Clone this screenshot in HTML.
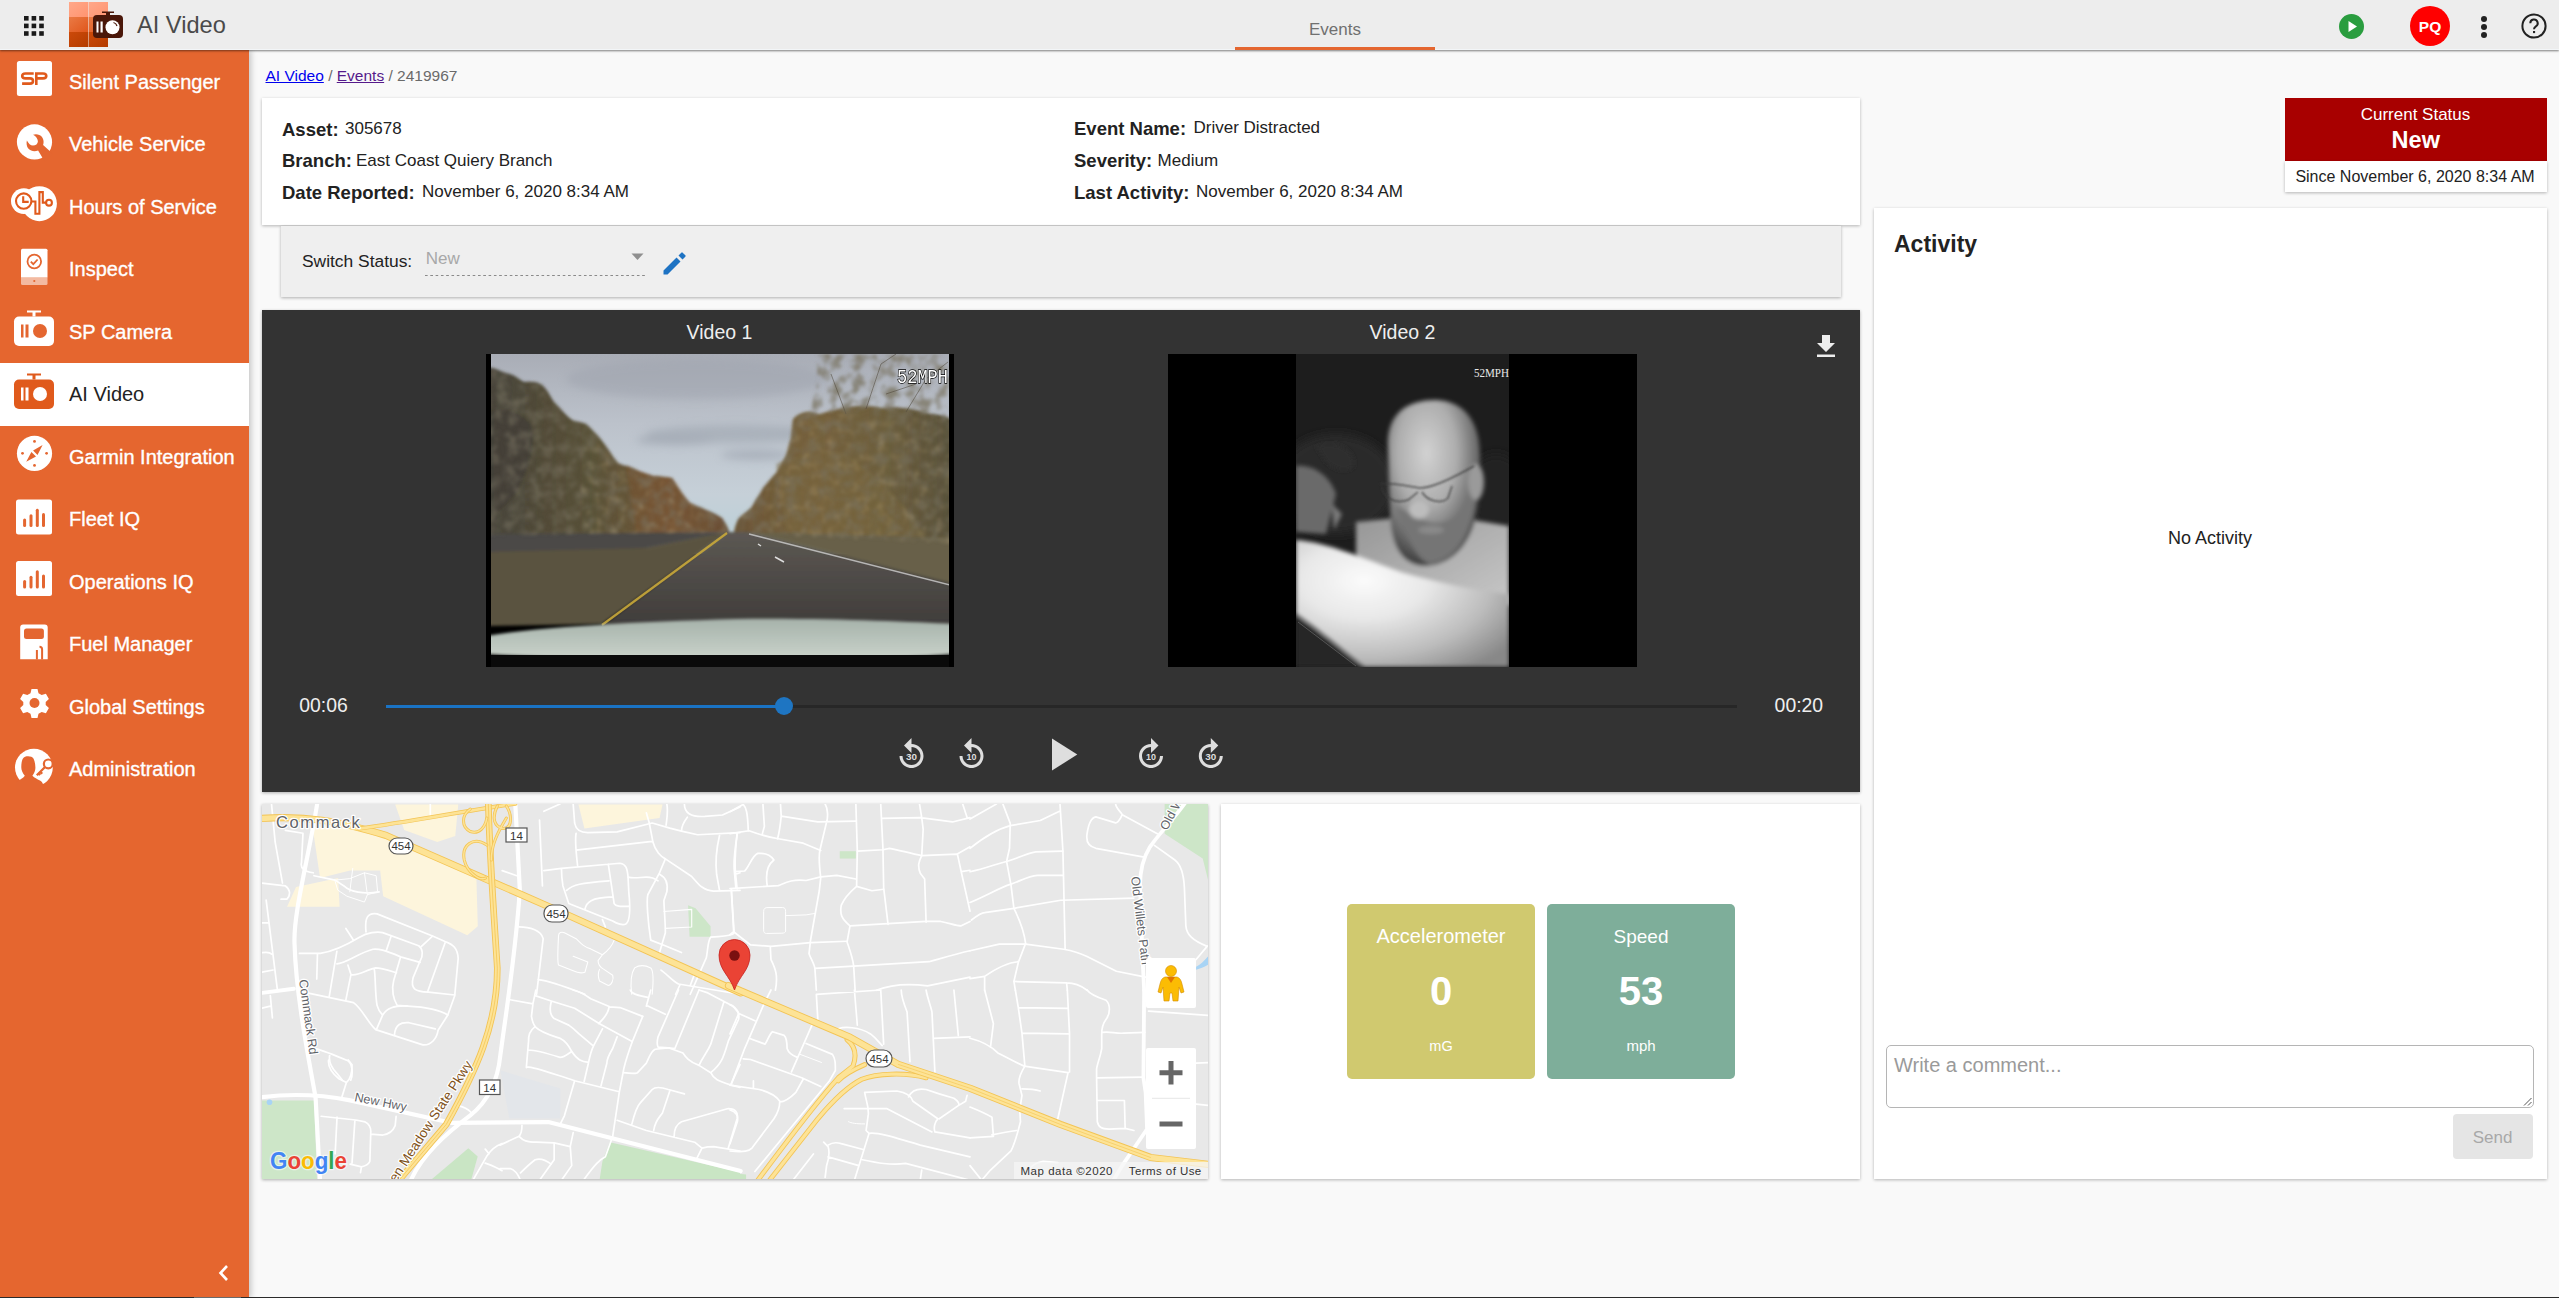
<!DOCTYPE html>
<html><head><meta charset="utf-8">
<style>
*{box-sizing:border-box;margin:0;padding:0}
html,body{width:2559px;height:1298px;overflow:hidden;background:#f9f9f9;font-family:"Liberation Sans",sans-serif;color:#222}
.a{position:absolute;line-height:1;white-space:nowrap}
.c{transform:translateX(-50%)}
#hdr{left:0;top:0;width:2559px;height:50px;background:#ededed;border-bottom:1px solid #f3f6f8;box-shadow:0 1px 2px rgba(0,0,0,.5);z-index:5}
#side{left:0;top:50px;width:249px;height:1248px;background:#e5662f;box-shadow:2px 0 6px rgba(0,0,0,.22);z-index:4}
.it{position:absolute;left:0;width:249px;height:63px;color:#fff;font-size:20px}
.it .tx{position:absolute;left:69px;top:21.5px;line-height:1;white-space:nowrap;-webkit-text-stroke:0.35px #fff}
.it.act{background:#fff;color:#222}
.it.act .tx{-webkit-text-stroke:0}
.it svg{position:absolute;left:0;top:0}
.card{background:#fff;box-shadow:0 1px 3px rgba(0,0,0,.28)}
.lbl{font-weight:bold;font-size:18.5px;color:#222}
.val{font-size:17px;color:#222}
</style></head><body>
<!-- HEADER -->
<div id="hdr" class="a">
  <svg class="a" style="left:24px;top:16px" width="20" height="20" viewBox="0 0 20 20" fill="#1a1a1a">
    <rect x="0" y="0" width="4.6" height="4.6"/><rect x="7.6" y="0" width="4.6" height="4.6"/><rect x="15.2" y="0" width="4.6" height="4.6"/>
    <rect x="0" y="7.6" width="4.6" height="4.6"/><rect x="7.6" y="7.6" width="4.6" height="4.6"/><rect x="15.2" y="7.6" width="4.6" height="4.6"/>
    <rect x="0" y="15.2" width="4.6" height="4.6"/><rect x="7.6" y="15.2" width="4.6" height="4.6"/><rect x="15.2" y="15.2" width="4.6" height="4.6"/>
  </svg>
  <svg class="a" style="left:69px;top:2px" width="56" height="46" viewBox="0 0 56 46">
    <defs>
      <linearGradient id="lg1" x1="0" y1="0" x2="1" y2="1"><stop offset="0" stop-color="#ffa88a"/><stop offset="1" stop-color="#ff9470"/></linearGradient>
      <linearGradient id="lg2" x1="0" y1="0" x2="1" y2="1"><stop offset="0" stop-color="#ea7a45"/><stop offset="1" stop-color="#e0571c"/></linearGradient>
      <linearGradient id="lg3" x1="0" y1="0" x2="1" y2="1"><stop offset="0" stop-color="#cc4a0a"/><stop offset="1" stop-color="#b33c00"/></linearGradient>
    </defs>
    <rect x="0" y="0" width="19" height="15" fill="url(#lg1)"/><rect x="19.5" y="0" width="19.5" height="15" fill="url(#lg1)"/>
    <rect x="0" y="15" width="19" height="15" fill="url(#lg2)"/><rect x="19.5" y="15" width="19.5" height="15" fill="url(#lg2)"/>
    <rect x="0" y="30" width="19" height="15" fill="url(#lg3)"/><rect x="19.5" y="30" width="19.5" height="15" fill="url(#lg3)"/>
    <path d="M33 9.5h12v1.5h-4v4h-4v-4h-4z" fill="#4a1709"/>
    <rect x="24" y="13" width="30" height="23" rx="4" fill="#4a1709"/>
    <rect x="27.5" y="19.5" width="2" height="11" fill="#fff"/><rect x="31.5" y="19.5" width="2.2" height="11" fill="#fff"/>
    <circle cx="43.5" cy="25.3" r="7" fill="#fff"/>
    <path d="M44.5 20.5a5 5 0 0 1 3.5 3.5" stroke="#4a1709" stroke-width="1.2" fill="none"/>
  </svg>
  <div class="a" style="left:137px;top:14px;font-size:23.6px;color:#4a4a4a">AI Video</div>
  <div class="a" style="left:1309px;top:21.4px;font-size:17px;color:#707070">Events</div>
  <div class="a" style="left:1235px;top:47px;width:200px;height:2.5px;background:#e46630"></div>
  <svg class="a" style="left:2339px;top:13.5px" width="25" height="25" viewBox="0 0 25 25"><circle cx="12.5" cy="12.5" r="12.5" fill="#2a9d3f"/><path d="M9.5 7v11l8.5-5.5z" fill="#fff"/></svg>
  <svg class="a" style="left:2410px;top:6px" width="40" height="40" viewBox="0 0 40 40"><circle cx="20" cy="20" r="20" fill="#f00"/></svg>
  <div class="a c" style="left:2430px;top:18.5px;font-size:15.5px;font-weight:bold;color:#fff">PQ</div>
  <svg class="a" style="left:2478px;top:15px" width="12" height="24" viewBox="0 0 12 24" fill="#222"><circle cx="6" cy="4" r="3"/><circle cx="6" cy="12" r="3"/><circle cx="6" cy="20" r="3"/></svg>
  <svg class="a" style="left:2520px;top:12px" width="28" height="28" viewBox="0 0 28 28"><circle cx="14" cy="14" r="11.6" fill="none" stroke="#222" stroke-width="2"/><path d="M10.3 11.2a3.7 3.7 0 1 1 5.6 3.1c-1.2.8-1.9 1.4-1.9 3" fill="none" stroke="#222" stroke-width="2"/><rect x="13" y="19" width="2.1" height="2.1" fill="#222"/></svg>
</div>

<!-- SIDEBAR -->
<div id="side" class="a">
  <div class="it" style="top:0px"><span class="tx">Silent Passenger</span>
    <svg width="60" height="63" viewBox="0 0 60 63"><rect x="16.9" y="10.9" width="35.1" height="35" rx="2.5" fill="#fff"/>
    <path d="M33.7,23.5 H25.5 C23.4,23.5 22.2,24.7 22.2,26 C22.2,27.3 23.4,28.4 25.5,28.4 H30 C32.1,28.4 33,29.5 33,31 C33,32.5 32.1,33.6 30,33.6 H22.1 M35,23.5 H43 C45.2,23.5 46.3,24.8 46.3,26 C46.3,27.3 45.2,28.4 43,28.4 H36.3 M36.3,23.5 V35" fill="none" stroke="#e05a1c" stroke-width="2.6"/></svg></div>
  <div class="it" style="top:62.5px"><span class="tx">Vehicle Service</span>
    <svg width="60" height="63" viewBox="0 0 60 63"><circle cx="34.5" cy="28.9" r="17.6" fill="#fff"/>
    <path d="M33.1,21.7 C35.5,20.8 40,21 42,24 C43.8,26.5 44,29.5 43.1,32.1 L53,41 L45,49 L38.1,37.5 C35,38.8 31,38.5 28.5,35.8 C26.5,33.5 26.2,30 26.9,27.5 C28.5,30.5 30.5,32.6 33,32.6 C35.8,32.6 37.8,30.8 37.9,28.5 C38,26 36,23.2 33.1,21.7 Z" fill="#e46630"/></svg></div>
  <div class="it" style="top:125px"><span class="tx">Hours of Service</span>
    <svg width="60" height="63" viewBox="0 0 60 63"><circle cx="23.9" cy="26.1" r="12.9" fill="#fff"/><circle cx="39.4" cy="28.7" r="17.5" fill="#fff"/>
    <g fill="none" stroke="#e05a1c" stroke-width="2.1"><circle cx="23.7" cy="26.1" r="7.7"/><path d="M23.2,21.3 V26.9 H28.7"/><path d="M31.4,26.5 H35.4 V38.8 H39.4 V17.1 H42.8 V27.6 H46.1"/><circle cx="49" cy="27.7" r="2.9"/></g></svg></div>
  <div class="it" style="top:187.5px"><span class="tx">Inspect</span>
    <svg width="60" height="63" viewBox="0 0 60 63"><path d="M21 12.2a1.5 1.5 0 0 1 1.5-1.5h23.5a1.5 1.5 0 0 1 1.5 1.5v27.3h-26.5z" fill="#fff"/><path d="M21 39.5h26.5v6a1.5 1.5 0 0 1 -1.5 1.5h-23.5a1.5 1.5 0 0 1 -1.5-1.5z" fill="#fff" opacity=".55"/>
    <circle cx="34.3" cy="23.5" r="6.8" fill="none" stroke="#e46630" stroke-width="1.8"/><path d="M30.8 23.6l2.5 2.5l4.3-4.6" fill="none" stroke="#e46630" stroke-width="1.8"/><circle cx="34.3" cy="43" r="1.1" fill="#e46630"/></svg></div>
  <div class="it" style="top:250px"><span class="tx">SP Camera</span>
    <svg width="60" height="63" viewBox="0 0 60 63"><path d="M27 10.5h14v2h-5.5v4h-3v-4h-5.5z" fill="#fff"/><rect x="14" y="16.5" width="40" height="29.5" rx="5" fill="#fff"/>
    <rect x="21" y="24.5" width="2.5" height="13" fill="#e46630"/><rect x="25.5" y="24.5" width="3" height="13" fill="#e46630"/><circle cx="40" cy="31" r="7" fill="#e46630"/></svg></div>
  <div class="it act" style="top:312.5px"><span class="tx">AI Video</span>
    <svg width="60" height="63" viewBox="0 0 60 63"><path d="M27 10.5h14v2h-5.5v4h-3v-4h-5.5z" fill="#e05a1c"/><rect x="14" y="16.5" width="40" height="29.5" rx="5" fill="#e05a1c"/>
    <rect x="21" y="24.5" width="2.5" height="13" fill="#fff"/><rect x="25.5" y="24.5" width="3" height="13" fill="#fff"/><circle cx="40" cy="31" r="7" fill="#fff"/></svg></div>
  <div class="it" style="top:375px"><span class="tx">Garmin Integration</span>
    <svg width="60" height="63" viewBox="0 0 60 63"><circle cx="34.5" cy="28.4" r="17.6" fill="#fff"/>
    <g fill="#e46630"><circle cx="34.5" cy="16.4" r="1.4"/><circle cx="22.5" cy="28.3" r="1.4"/><circle cx="46.6" cy="28.3" r="1.4"/><circle cx="34.5" cy="40.4" r="1.4"/>
    <path d="M42.6,20.1 L33.1,25.4 L37.5,30 Z M26.2,36.8 L31.4,27 L36,31.6 Z"/></g></svg></div>
  <div class="it" style="top:437.5px"><span class="tx">Fleet IQ</span>
    <svg width="60" height="63" viewBox="0 0 60 63"><rect x="16" y="11.5" width="36" height="35" rx="2.5" fill="#fff"/>
    <g fill="#e46630"><rect x="23.1" y="30.5" width="3" height="8.5" rx="1.5"/><rect x="29.5" y="26.3" width="3" height="12.7" rx="1.5"/><rect x="35.8" y="20.8" width="3" height="18.2" rx="1.5"/><rect x="42" y="25" width="3" height="14" rx="1.5"/></g></svg></div>
  <div class="it" style="top:500px"><span class="tx">Operations IQ</span>
    <svg width="60" height="63" viewBox="0 0 60 63"><rect x="16" y="11" width="36" height="35" rx="2.5" fill="#fff"/>
    <g fill="#e46630"><rect x="23.1" y="30" width="3" height="8.5" rx="1.5"/><rect x="29.5" y="25.8" width="3" height="12.7" rx="1.5"/><rect x="35.8" y="20.3" width="3" height="18.2" rx="1.5"/><rect x="42" y="24.5" width="3" height="14" rx="1.5"/></g></svg></div>
  <div class="it" style="top:562.5px"><span class="tx">Fuel Manager</span>
    <svg width="60" height="63" viewBox="0 0 60 63"><path d="M20.2,14.6 a3,3 0 0 1 3-3 h21.5 a3,3 0 0 1 3,3 V46.3 H20.2 Z" fill="#fff"/>
    <rect x="24" y="15.4" width="19.9" height="10.6" rx="2.5" fill="#e46630"/><path d="M36.9,37 V46.5 M39.5,33.8 C41.2,33.8 42.1,35 42.1,36.5 V46.5" fill="none" stroke="#e46630" stroke-width="2"/></svg></div>
  <div class="it" style="top:625px"><span class="tx">Global Settings</span>
    <svg width="60" height="63" viewBox="0 0 60 63"><g transform="translate(34.5 28)"><path d="M-3 -14h6l1 4.2 3.2 1.8 4.2-1.3 3 5.2-3.2 3v3.2l3.2 3-3 5.2-4.2-1.3-3.2 1.8-1 4.2h-6l-1-4.2-3.2-1.8-4.2 1.3-3-5.2 3.2-3v-3.2l-3.2-3 3-5.2 4.2 1.3 3.2-1.8z" fill="#fff"/><circle r="5" fill="#e46630"/></g></svg></div>
  <div class="it" style="top:687.5px"><span class="tx">Administration</span>
    <svg width="60" height="63" viewBox="0 0 60 63"><defs><clipPath id="admc"><circle cx="33.9" cy="29.6" r="18.9"/></clipPath></defs>
    <circle cx="33.9" cy="29.6" r="18.9" fill="#fff"/>
    <g><path d="M16,45 C19,42 23.5,40 24.8,37.8 C22.5,35 21.3,32 21.3,29.5 C21.2,26 21.8,22.5 22.8,20.8 C24,18.8 26,18.3 28.1,18.3 C30.5,18.3 32.5,19 33.6,20.8 C34.8,23 35.2,26 35.4,29.5 C35.5,32 34.5,35 32.4,37.8 C34.5,40 37,41 40,42.5 C41.5,43.2 42.5,44.5 43.2,46.5 L43.2,52 L16,52 Z" fill="#e46630"/>
    <path d="M45.3,28.8 L36.8,37.3 M40.3,33.8 L42.2,35.7 M38.6,35.5 L40.2,37" stroke="#e46630" stroke-width="2.3" fill="none"/></g>
    <circle cx="48.3" cy="25.9" r="4.4" fill="#fff" stroke="#e46630" stroke-width="2.2"/></svg></div>
  <svg class="a" style="left:216px;top:1214px" width="16" height="18" viewBox="0 0 16 18"><path d="M11 2l-6.5 7l6.5 7" fill="none" stroke="#fff" stroke-width="2.6"/></svg>
</div>

<!-- BREADCRUMB -->
<div class="a" style="left:265.5px;top:67.7px;font-size:15.5px;color:#6a6a6a"><span style="color:#0000ee;text-decoration:underline">AI Video</span> / <span style="color:#551a8b;text-decoration:underline">Events</span> / 2419967</div>

<!-- INFO CARD -->
<div class="a card" style="left:262px;top:98px;width:1598px;height:127px"></div>
<div class="a lbl" style="left:282px;top:121.1px">Asset:</div>
<div class="a val" style="left:345px;top:120.3px">305678</div>
<div class="a lbl" style="left:282px;top:152.3px">Branch:</div>
<div class="a val" style="left:356px;top:151.5px">East Coast Quiery Branch</div>
<div class="a lbl" style="left:282px;top:184.3px">Date Reported:</div>
<div class="a val" style="left:422px;top:183.3px">November 6, 2020 8:34 AM</div>
<div class="a lbl" style="left:1074px;top:120.1px">Event Name:</div>
<div class="a val" style="left:1193.5px;top:119.3px">Driver Distracted</div>
<div class="a lbl" style="left:1074px;top:152.3px">Severity:</div>
<div class="a val" style="left:1157.6px;top:151.5px">Medium</div>
<div class="a lbl" style="left:1074px;top:184.3px">Last Activity:</div>
<div class="a val" style="left:1196px;top:183.3px">November 6, 2020 8:34 AM</div>

<!-- SWITCH STATUS -->
<div class="a" style="left:281px;top:226px;width:1560px;height:71px;background:#efefef;box-shadow:0 1px 3px rgba(0,0,0,.3)"></div>
<div class="a" style="left:302px;top:253.1px;font-size:17.4px;color:#222">Switch Status:</div>
<div class="a" style="left:425.7px;top:249.5px;font-size:17px;color:#a8a8a8">New</div>
<div class="a" style="left:425px;top:275px;width:222px;height:1px;background-image:linear-gradient(to right,#8a8a8a 45%,transparent 45%);background-size:5.3px 1px"></div>
<svg class="a" style="left:631px;top:253px" width="13" height="8" viewBox="0 0 13 8"><path d="M0.5 0.5h12l-6 6.5z" fill="#8f8f8f"/></svg>
<svg class="a" style="left:662px;top:250px" width="26" height="26" viewBox="0 0 26 26"><path d="M1.5 20.5v4h4l13-13-4-4z M20.5 9.5l2.8-2.8a1 1 0 0 0 0-1.4l-2.6-2.6a1 1 0 0 0 -1.4 0l-2.8 2.8z" fill="#1e73c3"/></svg>

<!-- STATUS BOX -->
<div class="a" style="left:2285px;top:98px;width:262px;height:62.5px;background:#a80000"></div>
<div class="a card" style="left:2285px;top:160.5px;width:262px;height:31.5px"></div>
<div class="a c" style="left:2415.5px;top:106px;font-size:17px;color:#fff">Current Status</div>
<div class="a c" style="left:2415.75px;top:129.3px;font-size:23.5px;font-weight:bold;color:#fff">New</div>
<div class="a c" style="left:2415px;top:169px;font-size:16px;color:#222">Since November 6, 2020 8:34 AM</div>

<!-- VIDEO PANEL -->
<div class="a" style="left:262px;top:310px;width:1598px;height:481.5px;background:#333;box-shadow:0 1px 3px rgba(0,0,0,.3)"></div>
<div class="a c" style="left:719.5px;top:322.7px;font-size:19.5px;color:#eee">Video 1</div>
<div class="a c" style="left:1402.5px;top:322.7px;font-size:19.5px;color:#eee">Video 2</div>
<div id="v1" class="a" style="left:486px;top:354px;width:468px;height:312.5px;background:#000;overflow:hidden"><svg width="468" height="313" viewBox="0 0 468 313" style="position:absolute;left:0;top:0">
<defs>
 <linearGradient id="sky" x1="0" y1="0" x2="0" y2="1">
  <stop offset="0" stop-color="#a9adb6"/><stop offset=".35" stop-color="#bcc2cb"/><stop offset=".7" stop-color="#c6d0d8"/><stop offset="1" stop-color="#b8d0d8"/>
 </linearGradient>
 <linearGradient id="road" x1="0" y1="0" x2="0" y2="1">
  <stop offset="0" stop-color="#5c5853"/><stop offset="1" stop-color="#3e3b39"/>
 </linearGradient>
 <linearGradient id="hood" x1="0" y1="0" x2="0" y2="1">
  <stop offset="0" stop-color="#a6b2aa"/><stop offset=".5" stop-color="#b8c3bb"/><stop offset="1" stop-color="#cbd3cb"/>
 </linearGradient>
 <linearGradient id="ltree" x1="0" y1="0" x2="1" y2="0">
  <stop offset="0" stop-color="#48443a"/><stop offset=".45" stop-color="#5a5238"/><stop offset=".75" stop-color="#735636"/><stop offset="1" stop-color="#5c4c36"/>
 </linearGradient>
 <linearGradient id="rtree" x1="0" y1="0" x2="1" y2="0">
  <stop offset="0" stop-color="#6a5436"/><stop offset=".35" stop-color="#76623c"/><stop offset=".7" stop-color="#6c5e3c"/><stop offset="1" stop-color="#57503a"/>
 </linearGradient>
 <filter id="bl1" x="-5%" y="-5%" width="110%" height="110%"><feGaussianBlur stdDeviation="1.4"/></filter>
 <filter id="bl2" x="-20%" y="-20%" width="140%" height="140%"><feGaussianBlur stdDeviation="4"/></filter>
 <filter id="fol" x="0" y="0" width="100%" height="100%">
  <feTurbulence type="fractalNoise" baseFrequency="0.09" numOctaves="3" seed="7" result="n"/>
  <feColorMatrix in="n" type="matrix" values="0 0 0 0 0.2  0 0 0 0 0.18  0 0 0 0 0.13  0 0 0 -3 1.75" result="c"/>
  <feComposite in="c" in2="SourceGraphic" operator="in"/>
 </filter>
 <filter id="fol2" x="0" y="0" width="100%" height="100%">
  <feTurbulence type="fractalNoise" baseFrequency="0.12" numOctaves="2" seed="11" result="n"/>
  <feColorMatrix in="n" type="matrix" values="0 0 0 0 0.62  0 0 0 0 0.48  0 0 0 0 0.26  0 0 0 3 -1.55" result="c"/>
  <feComposite in="c" in2="SourceGraphic" operator="in"/>
 </filter>
 <clipPath id="vc1"><rect x="5" y="0" width="458" height="313"/></clipPath>
</defs>
<rect width="468" height="313" fill="#000"/>
<g clip-path="url(#vc1)">
 <rect x="0" y="0" width="468" height="200" fill="url(#sky)"/>
 <g filter="url(#bl2)" opacity=".5">
  <ellipse cx="210" cy="25" rx="130" ry="20" fill="#9ea3ad"/>
  <ellipse cx="250" cy="80" rx="90" ry="9" fill="#98a0aa"/>
  <ellipse cx="190" cy="86" rx="40" ry="5" fill="#8f96a2"/>
  <ellipse cx="270" cy="101" rx="35" ry="5" fill="#939aa6"/>
 </g>
 <g filter="url(#bl1)">
  
  <path d="M0,14 C8,12 16,19 24,20 C30,22 34,26 38,28 C46,27 52,28 56,31 C62,36 65,44 68,48 C75,55 82,64 88,67 C94,68 98,69 100,70 C105,74 108,78 110,80 C116,86 119,91 122,95 C126,101 129,106 132,109 C136,111 139,112 142,112 C150,116 158,119 167,122 C175,122 181,123 186,124 C190,130 193,134 196,139 C199,143 201,147 204,149 C209,151 212,153 216,154 C224,158 230,160 236,164 C240,170 242,174 243,178 L0,182 Z" fill="url(#ltree)"/>
  <path d="M0,60 C15,50 30,55 45,70 C52,90 40,120 30,140 L0,170 Z" fill="#423f36" opacity=".7"/>
  <path d="M140,112 C150,116 160,119 167,122 L186,124 L196,139 L204,149 L236,164 L243,178 L150,178 Z" fill="#7d5535" opacity=".45"/>
  <path d="M248,178 C249,172 251,167 253,164 C258,160 262,157 265,154 C270,146 274,140 277,134 C282,128 286,123 290,119 C294,112 297,107 300,102 C302,95 303,90 305,85 C306,78 306,71 307,65 C312,60 317,58 322,58 C327,58 330,60 334,60 C340,58 346,56 352,55 C365,52 380,50 395,54 C410,52 430,55 445,60 C452,60 458,62 468,66 L468,188 Z" fill="url(#rtree)"/>
  <path d="M290,110 C310,100 340,95 360,100 C390,120 420,150 440,185 L300,182 Z" fill="#7a6840" opacity=".45"/>
  <path d="M0,180 L244,178 L140,198 L0,204 Z" fill="#4c4a46"/>
  <path d="M0,198 L160,194 L242,178 L116,270 L0,272 Z" fill="#5a5340"/>
  <path d="M242,178 L262,178 L468,230 L468,276 L110,276 Z" fill="url(#road)"/>
  <path d="M262,178 L468,184 L468,230 Z" fill="#67604a"/>
 </g>
 <g filter="url(#bl1)"><g filter="url(#fol)" opacity=".8"><path d="M328,0 L468,0 L468,70 L445,62 L395,56 L352,57 L334,62 L322,60 C330,40 335,20 328,0 Z" fill="#000"/></g></g>
 <g stroke="#4a4234" stroke-width="1" fill="none" opacity=".5">
  <path d="M360,60 L345,20 M380,55 L395,10 L410,0 M420,58 L440,25 L462,8 M400,40 L430,30"/>
 </g>
 <g filter="url(#bl1)"><g filter="url(#fol)" opacity=".5">
  <path d="M0,14 L24,20 L38,28 L56,31 L68,48 L88,67 L100,70 L110,80 L122,95 L132,109 L142,112 L167,122 L186,124 L196,139 L204,149 L216,154 L236,164 L243,178 L0,182 Z M248,178 L253,164 L265,154 L277,134 L290,119 L300,102 L305,85 L307,65 L322,58 L334,60 L352,55 L395,54 L445,60 L468,66 L468,188 Z" fill="#000"/>
 </g>
 <g filter="url(#fol2)" opacity=".22">
  <path d="M100,80 L150,118 L191,127 L204,149 L241,169 L244,180 L90,180 Z M468,66 L322,58 L307,65 L300,102 L283,124 L278,144 L262,155 L250,164 L248,180 L468,190 Z" fill="#000"/>
 </g></g>
 <path d="M241,179 L116,271" stroke="#c9a93a" stroke-width="2.2" fill="none" opacity=".9"/>
 <path d="M263,180 L468,232" stroke="#cfcfcf" stroke-width="1.3" fill="none" opacity=".8"/>
 <path d="M272,190 L275,192 M289,203 L298,208" stroke="#ddd" stroke-width="1.5"/>
 <path d="M0,282 C60,272 150,268 250,265 C350,264 420,268 468,270 L468,300 C400,306 300,306 234,306 C160,306 60,304 0,300 Z" fill="url(#hood)" filter="url(#bl1)"/>
 <rect x="0" y="301" width="468" height="12" fill="#0a0a0a"/>
</g>
<text x="411" y="29" font-family="Liberation Mono" font-size="21" fill="#fff" stroke="#000" stroke-width="1.4" paint-order="stroke" textLength="51" lengthAdjust="spacingAndGlyphs">52MPH</text>
</svg></div>
<div class="a" style="left:1168px;top:354px;width:469px;height:312.5px;background:#000"></div>
<div id="v2" class="a" style="left:1296px;top:354px;width:213px;height:312.5px;background:#1e1e1e;overflow:hidden"><svg width="213" height="313" viewBox="0 0 213 313" style="position:absolute;left:0;top:0">
<defs>
 <radialGradient id="head" cx=".42" cy=".32" r=".72">
  <stop offset="0" stop-color="#d2d2d2"/><stop offset=".45" stop-color="#adadad"/><stop offset=".8" stop-color="#626262"/><stop offset="1" stop-color="#2e2e2e"/>
 </radialGradient>
 <radialGradient id="arm" cx=".32" cy=".32" r=".85">
  <stop offset="0" stop-color="#fbfbfb"/><stop offset=".35" stop-color="#e8e8e8"/><stop offset=".7" stop-color="#bdbdbd"/><stop offset="1" stop-color="#888"/>
 </radialGradient>
 <linearGradient id="shirt" x1="0" y1="0" x2="1" y2="1"><stop offset="0" stop-color="#959595"/><stop offset="1" stop-color="#c8c8c8"/></linearGradient>
 <filter id="b2" x="-10%" y="-10%" width="120%" height="120%"><feGaussianBlur stdDeviation="2"/></filter>
 <filter id="b1" x="-10%" y="-10%" width="120%" height="120%"><feGaussianBlur stdDeviation="1"/></filter>
 <filter id="b3" x="-20%" y="-20%" width="140%" height="140%"><feGaussianBlur stdDeviation="5"/></filter>
</defs>
<rect width="213" height="313" fill="#1d1d1d"/>
<g filter="url(#b3)">
 <ellipse cx="40" cy="130" rx="60" ry="50" fill="#2a2a2a"/>
 <ellipse cx="200" cy="140" rx="30" ry="40" fill="#232323"/>
</g>
<g filter="url(#b2)">
 <path d="M0,112 C20,110 35,125 40,140 L30,180 L0,178 Z" fill="#6a6a6a"/>
 <path d="M36,150 L46,160 L38,176 Z" fill="#7a7a7a"/>
 <path d="M20,92 C40,85 60,95 58,112 C52,120 38,116 30,108 Z" fill="#2f2f2f"/>
 <path d="M60,168 L140,160 L213,172 L213,252 L60,218 Z" fill="url(#shirt)"/>
 <path d="M92,95 C90,60 110,46 140,46 C170,47 185,70 184,105 L182,150 C178,185 160,210 130,212 C105,212 95,190 94,160 Z" fill="url(#head)"/>
 <path d="M100,152 C108,178 120,206 134,210 C160,206 176,182 180,142 L172,138 C166,160 152,172 134,168 C118,164 108,155 100,152 Z" fill="#757575"/>
 <ellipse cx="180" cy="128" rx="8" ry="18" fill="#9a9a9a"/>
 <ellipse cx="123" cy="156" rx="10" ry="9" fill="#bdbdbd"/>
 <ellipse cx="135" cy="176" rx="13" ry="4" fill="#8a8a8a"/>
</g>
<g filter="url(#b1)" fill="none" stroke="#3a3a3a" stroke-width="1.5" opacity=".8">
 <path d="M84,130 C95,128 110,132 124,134 C135,134 150,128 178,112"/>
 <path d="M86,133 C88,145 100,150 112,146 L122,138 M126,138 C132,148 146,150 152,144 L156,132"/>
</g>
<g filter="url(#b2)">
 <path d="M0,186 C30,188 70,205 105,218 C140,228 175,236 213,240 L213,313 L68,313 C40,290 15,270 0,260 Z" fill="url(#arm)"/>
 <path d="M0,262 C15,272 40,292 66,313 L0,313 Z" fill="#252525"/>
</g>
<path d="M2,268 L60,312" stroke="#555" stroke-width="1"/>
<text x="178" y="23" font-family="Liberation Serif" font-size="12.5" fill="#e8e8e8" textLength="35" lengthAdjust="spacingAndGlyphs">52MPH</text>
</svg></div>
<svg class="a" style="left:1815px;top:334px" width="22" height="24" viewBox="0 0 22 24"><path d="M7 1h8v8h5l-9 9-9-9h5z" fill="#eee"/><rect x="2" y="20.5" width="18" height="2.5" fill="#eee"/></svg>
<div class="a" style="left:299.3px;top:695.7px;font-size:19.4px;color:#eee">00:06</div>
<div class="a" style="left:1774.6px;top:695.7px;font-size:19.4px;color:#eee">00:20</div>
<div class="a" style="left:386px;top:704.5px;width:1351px;height:3px;background:#272727"></div>
<div class="a" style="left:386px;top:704.5px;width:398px;height:3px;background:#1a73c4"></div>
<div class="a" style="left:774.5px;top:697px;width:18px;height:18px;border-radius:50%;background:#1e75c2"></div>

<!-- controls -->
<svg class="a" style="left:0;top:0;overflow:visible" width="1" height="1">
 <g fill="#dedede">
  <g transform="translate(893.5,736.5) scale(1.5)"><path d="M12 5V1L7 6l5 5V7c3.31 0 6 2.69 6 6s-2.69 6-6 6-6-2.69-6-6H4c0 4.42 3.58 8 8 8s8-3.58 8-8-3.58-8-8-8z"/></g>
  <g transform="translate(953.5,736.5) scale(1.5)"><path d="M12 5V1L7 6l5 5V7c3.31 0 6 2.69 6 6s-2.69 6-6 6-6-2.69-6-6H4c0 4.42 3.58 8 8 8s8-3.58 8-8-3.58-8-8-8z"/></g>
  <g transform="translate(1133,736.5) scale(1.5)"><path d="M18 13c0 3.31-2.69 6-6 6s-6-2.69-6-6 2.69-6 6-6v4l5-5-5-5v4c-4.42 0-8 3.58-8 8s3.58 8 8 8 8-3.58 8-8h-2z"/></g>
  <g transform="translate(1192.8,736.5) scale(1.5)"><path d="M18 13c0 3.31-2.69 6-6 6s-6-2.69-6-6 2.69-6 6-6v4l5-5-5-5v4c-4.42 0-8 3.58-8 8s3.58 8 8 8 8-3.58 8-8h-2z"/></g>
  <g transform="translate(1033.6,726.9) scale(2.3)"><path d="M8 5v14l11-7z"/></g>
 </g>
 <g font-family="Liberation Sans" font-size="9.5" font-weight="bold" fill="#dedede" text-anchor="middle">
  <text x="911.5" y="760.3" textLength="11" lengthAdjust="spacingAndGlyphs">30</text>
  <text x="971.5" y="760.3" textLength="10" lengthAdjust="spacingAndGlyphs">10</text>
  <text x="1151" y="760.3" textLength="10" lengthAdjust="spacingAndGlyphs">10</text>
  <text x="1210.8" y="760.3" textLength="11" lengthAdjust="spacingAndGlyphs">30</text>
 </g>
</svg>
<!-- MAP -->
<div id="map" class="a" style="left:262px;top:804px;width:946px;height:374.5px;background:#e8e8e8;box-shadow:0 1px 3px rgba(0,0,0,.3);overflow:hidden"><svg width="946" height="375" viewBox="0 0 946 375" style="position:absolute;left:0;top:0">
<rect width="946" height="375" fill="#e8e8e8"/>
<g transform="translate(-2,-4) scale(0.3004)">
 <path d="M90,355 L120,290 L260,260 L265,355 Z M175,90 L330,85 L560,170 L650,210 L720,250 L725,420 L690,450 L410,320 L400,235 L300,235 L200,260 Z M450,15 L660,15 L650,120 L590,140 L480,100 Z M1060,15 L1340,15 L1330,60 L1080,95 Z" fill="#fdf5dc"/>
 <path d="M0,1000 L180,1000 L190,1270 L0,1270 Z M1425,350 L1450,360 L1500,420 L1500,455 L1430,455 Z" fill="#cde6c8"/>
 <path d="M800,900 L1000,960 L1000,1060 L830,1060 Z" fill="#e3e6ea"/>
</g>
<g transform="translate(238,186) scale(0.14635)"><path d="M750,1040 L900,1075 L1640,1245 L1640,1300 L680,1300 L700,1170 Z" fill="#c9e5c4"/></g>
<g transform="translate(0,256) scale(0.09379)"><path d="M1800,1280 L2200,940 L2300,1030 L2230,1280 Z" fill="#c9e5c4"/><circle cx="80" cy="450" r="30" fill="#a8d4f5"/></g>
<g transform="translate(708,-4) scale(0.14635)">
 <path d="M1330,28 L1650,28 L1650,640 L1590,400 L1330,230 Z" fill="#cde6c8"/>
 <path d="M1545,1140 C1580,1120 1610,1090 1650,1040 L1650,1110 C1610,1140 1580,1150 1545,1160 Z" fill="#a8d4f5"/>
</g>
<g transform="translate(468,-4) scale(0.14635)"><path d="M750,350 L860,350 L860,400 L750,400 Z" fill="#cde6c8"/></g>
<g transform="translate(468,186) scale(0.14635)"><path d="M0,1250 L110,1260 L110,1300 L0,1300 Z" fill="#c9e5c4"/></g>
<!-- minor streets -->
<g fill="none" stroke="#fff" stroke-width="1.7" stroke-linejoin="round" stroke-linecap="round">
 <g transform="translate(0,0) scale(0.14635)">
  <path vector-effect="non-scaling-stroke" d="M65,0 L90,260 L140,540 M160,180 L280,200 L270,400 C260,440 290,460 350,470 M0,540 L160,560 C190,580 200,620 170,650 L130,650 M355,490 L500,520 L560,560 C600,600 700,620 800,600 M1150,0 L1150,80"/>
  <path vector-effect="non-scaling-stroke" stroke-width="1" d="M500,520 L600,510 L700,470 L780,490 L790,600 L720,620 L700,670 L580,630 L520,590 Z M620,440 L600,600 M700,470 L720,620"/>
 </g>
 <g transform="translate(0,96) scale(0.13865)">
  <path vector-effect="non-scaling-stroke" d="M300,665 L660,740 C720,780 760,880 820,935 L1160,1045 C1220,1050 1260,1000 1270,940 L1340,830 L1390,690 L1415,420 C1410,350 1380,320 1320,300 L1230,260 L830,100 C760,90 740,130 750,230"/>
  <path vector-effect="non-scaling-stroke" d="M270,385 L420,385 C520,370 600,330 700,270 C760,235 830,225 870,235 L1130,330 C1160,350 1165,400 1140,440 L1090,560 C1070,640 1100,660 1200,665 L1390,685"/>
  <path vector-effect="non-scaling-stroke" d="M540,370 L485,695 M540,460 C600,460 700,380 800,355 C840,350 880,360 1000,410 L1140,450 M1000,410 L950,580 C930,650 950,720 975,760 L1050,765 C1150,770 1280,790 1340,830 M930,265 L895,370 M1230,260 L1150,335 M1320,310 L1195,660"/>
  <path vector-effect="non-scaling-stroke" d="M620,470 C640,530 640,545 650,540 C700,545 760,500 820,490 C860,490 920,510 970,525 M640,545 L605,720 M810,500 C820,560 815,680 830,760 C840,800 860,820 870,830 M870,830 C900,780 950,760 1050,765 M870,830 L825,935 M955,975 C960,900 1000,880 1060,885 L1250,930"/>
  <path vector-effect="non-scaling-stroke" d="M30,0 L110,640 M0,165 L50,165 M0,380 C30,375 60,380 70,390 M0,520 L80,505 M0,780 L60,765 M60,690 L75,850 M400,390 L395,570 M605,205 L660,290 M380,1070 C420,1080 550,1130 620,1160 C650,1180 660,1250 640,1300 M490,1110 C480,1150 490,1200 540,1250 L580,1300"/>
 </g>
 <g transform="translate(0,256) scale(0.09379)">
  <path vector-effect="non-scaling-stroke" d="M710,0 C700,80 760,150 820,200 L900,240 C950,200 960,100 960,50 L920,0 M900,240 L850,400 M630,600 L1000,640 L1100,660 C1140,680 1160,720 1160,760 L1150,1080 C1140,1110 1100,1130 1060,1140 L940,1110 M800,610 L780,1000 M990,650 L960,1100 M1160,790 L1290,800 C1360,790 1400,750 1420,700 L1430,600 M1060,1140 L1050,1200 M2100,490 C2150,500 2200,530 2230,560 M2559,890 C2480,920 2440,960 2400,1020 L2250,1280 M2380,950 L2420,1000 M2380,1100 C2450,1120 2500,1150 2559,1180"/>
 </g>
 <g transform="translate(238,0) scale(0.14635)">
  <path vector-effect="non-scaling-stroke" d="M300,50 L410,0 M270,110 L290,560 M15,455 L115,490 M500,0 L510,130 C520,180 550,195 600,195 L800,190 L1040,130 L1160,165 L1240,185 L1350,210 L1640,195 M1140,0 C1150,50 1140,100 1135,145 M1260,0 C1260,60 1300,90 1400,85 L1520,75 L1640,20 M1280,90 C1250,130 1240,170 1240,185"/>
  <path vector-effect="non-scaling-stroke" d="M520,200 C510,250 520,330 530,420 M520,315 L1040,255 M1000,60 L1020,130 L1045,260 C1060,320 1100,360 1130,375 L1310,495 C1350,540 1380,590 1460,595 L1640,590 M300,455 L420,440 L760,410 L820,405 C860,410 870,440 875,500 L880,600 C890,700 890,800 860,820 C840,830 800,820 770,800 L470,680 L430,560 C420,500 420,460 420,440 M740,410 L780,680 C790,700 820,700 880,700 M455,590 C500,550 550,540 745,525 M580,720 C590,670 620,640 770,635"/>
  <path vector-effect="non-scaling-stroke" d="M875,500 C920,510 960,500 1000,500 C1030,500 1060,510 1080,525 M1130,375 L1090,470 L1010,620 C1000,660 1010,800 1030,930 L1120,965 L1240,1015 M1090,480 C1130,500 1150,540 1140,600 L1120,660 C1120,700 1130,800 1130,880 L1090,1015 M1500,215 C1480,300 1470,390 1480,480 L1500,590 M1620,200 C1610,300 1600,400 1610,480 L1640,470 M1610,480 L1620,580 M1580,590 L1600,880 L1590,890 C1560,900 1520,905 1440,910 C1420,930 1420,1000 1410,1050 L1300,1300 M700,790 L720,840 M130,840 C200,840 280,860 295,920 L250,1300 M1100,1135 C1150,1170 1180,1210 1220,1230 L1640,1300 M1200,1300 L1230,1235 M1300,1240 L1330,1160 M260,1200 C350,1210 450,1250 580,1300"/>
  <path vector-effect="non-scaling-stroke" stroke-width="1.1" d="M1120,735 L1310,720 L1310,840 L1130,850 M400,900 C400,880 420,870 440,880 L520,920 C560,960 580,980 620,990 L700,1030 C740,1000 770,960 780,930 M700,1030 L670,1070 C670,1100 690,1120 710,1130 L770,1170 C780,1200 760,1240 740,1240 L680,1210 C670,1180 670,1150 680,1130 M500,1040 L600,1080 L580,1150 C550,1160 520,1150 500,1140 L400,1100 C390,1080 395,1000 400,900 M900,1300 C890,1220 900,1150 920,1120 C950,1100 990,1100 1030,1120 C1050,1140 1050,1200 1040,1300"/>
 </g>
 <g transform="translate(238,186) scale(0.14635)">
  <path vector-effect="non-scaling-stroke" d="M60,65 L225,95 M245,0 L225,95 L215,180 C220,210 230,240 245,255 C280,290 350,310 410,330 C450,350 470,380 490,420 C530,480 560,490 605,495 L575,625 M245,40 L350,75 L510,125 L680,230 L900,350 M350,80 C340,120 340,170 370,195 L470,240 C500,260 520,280 540,300 L635,380 M500,0 C540,10 580,30 620,60 L750,115 L820,120 L975,180 M745,115 C740,170 700,200 675,230 M700,265 L640,380 C620,420 610,470 605,495 M800,320 L770,400 C740,450 730,470 730,500 L690,655"/>
  <path vector-effect="non-scaling-stroke" d="M1220,0 L1080,320 C1070,360 1075,380 1080,390 L1150,395 L1195,400 L1360,0 M1010,110 L1130,165 M975,180 L905,350 C870,450 850,500 840,570 L815,700 L770,1000 L720,1140 C680,1160 650,1190 570,1300 M1000,110 L1030,0 M240,250 C200,280 195,310 195,350 L180,530 M195,410 C240,410 280,420 410,460 C440,460 460,440 490,420 M185,525 C230,525 280,545 510,620 L815,695 M510,620 L440,860 L415,910"/>
  <path vector-effect="non-scaling-stroke" d="M845,565 C880,570 920,575 940,565 L1000,500 C1020,460 1030,420 1060,405 L1150,395 L1250,430 C1270,460 1290,490 1360,515 L1440,565 C1460,610 1490,620 1580,650 L1640,665 M1530,80 L1440,370 C1420,420 1390,450 1360,515 M1360,0 L1420,20 L1590,110 C1620,140 1640,160 1630,200 L1560,350 C1530,450 1520,500 1440,565 M1640,510 L1580,640 M900,920 C920,840 940,790 960,770 L1040,680 C1060,660 1090,660 1150,680 L1260,710 M1160,690 L1110,840 C1090,870 1060,890 1050,960 M800,890 L1000,960 L1330,1040 L1380,1080 C1420,1070 1440,1070 1460,1070 L1640,1100 M1380,1080 L1345,1150 M1190,1000 C1190,960 1200,920 1240,900 L1560,810 C1610,810 1630,840 1620,880 L1560,1080"/>
  <path vector-effect="non-scaling-stroke" d="M150,925 C150,970 140,990 130,1000 C160,1030 180,1040 250,1040 L370,1045 L480,1070 L500,975 M0,1060 L130,1000 M370,1045 L370,1160 L270,1300 M480,1070 L490,1200 L420,1300 M0,1220 L70,1220 C100,1230 120,1250 140,1300 M140,1250 C160,1230 200,1190 240,1160 C270,1150 310,1160 350,1190 M890,0 C900,30 950,40 1010,50"/>
 </g>
 <g transform="translate(468,-4) scale(0.14635)">
  <path vector-effect="non-scaling-stroke" d="M0,80 L90,30 C110,50 120,80 125,210 M225,28 L235,180 L220,235 M345,28 L350,110 C345,160 340,210 325,265 M350,110 L600,150 L860,145 M650,28 C670,60 670,120 660,150 L615,340 C605,380 610,450 620,530 L610,620 L550,960 L540,1050 C550,1080 575,1120 580,1150 L590,1300"/>
  <path vector-effect="non-scaling-stroke" d="M860,28 L870,350 L865,590 C830,620 780,670 760,720 C750,780 760,810 820,860 L800,970 C810,1000 840,1080 845,1135 L855,1300 M1030,28 L1045,330 L1050,600 L1080,850 M1295,28 L1310,120 L1320,200 L1310,380 C1290,420 1280,450 1300,500 L1330,540 L1340,835 M1590,28 L1620,120 M1040,125 L1300,120 L1520,150 L1640,120"/>
  <path vector-effect="non-scaling-stroke" d="M0,230 L130,210 C200,235 260,255 330,265 L500,295 L620,345 M50,230 C40,300 20,400 30,490 L40,600 M30,490 L100,485 C130,460 150,380 190,365 C240,360 280,380 300,410 M300,410 C260,440 240,500 255,590 M0,605 L330,585 C380,565 420,540 520,550 L620,525 L730,515 L860,540"/>
  <path vector-effect="non-scaling-stroke" d="M870,350 L1045,340 L1090,330 C1150,340 1230,365 1310,380 L1550,370 L1640,320 M1555,375 L1580,490 L1640,480 M1580,490 L1640,760 M865,590 L970,620 L1050,610 M10,610 L25,900 L0,920 M25,900 L140,990 L280,1000 L550,975 L800,965 M275,1000 L280,1090 C310,1150 330,1200 310,1300"/>
  <path vector-effect="non-scaling-stroke" d="M820,860 L1080,845 L1340,830 L1440,830 C1500,840 1540,860 1580,860 L1640,830 M580,1150 L845,1135 L1360,1105 C1450,1080 1550,1050 1640,1030 M1000,1300 C1100,1260 1200,1250 1350,1270 L1640,1210"/>
  <path vector-effect="non-scaling-stroke" stroke-width="1" d="M230,760 C230,740 240,735 260,735 L360,735 C375,735 380,745 380,760 L380,895 C380,905 370,910 355,910 L250,912 C235,912 230,905 230,890 Z M380,790 L520,785 L580,775"/>
 </g>
 <g transform="translate(468,186) scale(0.14635)">
  <path vector-effect="non-scaling-stroke" d="M280,0 L230,100 L100,400 L10,640 M0,100 C30,110 50,140 60,160 L170,210 M60,160 L0,300 M590,30 L1030,0 M590,30 L600,200 M850,0 L870,240 M1030,0 L1050,370 M1170,0 C1170,50 1190,100 1210,150 L1230,490 M1340,0 C1350,60 1370,100 1380,150 L1400,560 M1530,0 L1560,310 M1390,330 L1640,320 M740,265 C780,250 880,250 960,300 C1000,330 1020,360 1040,380"/>
  <path vector-effect="non-scaling-stroke" d="M130,330 L240,370 C260,340 270,300 290,285 L370,310 C390,330 390,380 390,400 C400,430 430,450 460,460 M560,240 L420,560 M520,365 L700,440 C720,470 720,500 720,550 L680,620 L170,1240 M90,470 L140,475 L490,600 L620,660 M0,650 L200,680 C280,700 320,730 340,760 C340,800 320,850 300,880 L150,1080 C130,1100 100,1110 0,1100 M340,765 C380,765 420,730 450,700 L500,610 M160,620 L160,670 M0,820 C40,830 60,860 50,900 L0,1050"/>
  <path vector-effect="non-scaling-stroke" d="M920,700 C930,760 950,800 945,850 L930,960 L950,980 C1000,970 1100,1000 1300,1060 L1640,1140 M920,700 L1140,690 C1200,700 1240,720 1250,760 L1420,880 C1400,900 1390,940 1400,970 L1640,1010 M780,810 L1070,810 L1380,970 M1220,730 C1240,690 1280,670 1340,680 L1430,710 L1530,740 C1560,760 1570,780 1560,790 L1610,760 L1620,720 M1560,790 L1430,880 M950,980 L850,1300 M640,1040 L670,1070 C680,1100 680,1140 660,1200 L650,1280 M670,1060 C700,1040 730,1040 760,1050 L910,1090 M670,1140 L880,1200 M905,1160 C1000,1180 1100,1200 1200,1185 L1640,1300 M1300,1300 L1310,1230 M430,1300 L570,1120"/>
  <path vector-effect="non-scaling-stroke" stroke-width="1" d="M480,440 L625,495 M810,900 C830,910 860,915 920,915"/>
 </g>
 <g transform="translate(708,-4) scale(0.14635)">
  <path vector-effect="non-scaling-stroke" d="M0,130 L180,28 M225,28 L275,160 L270,330 L250,420 L280,580 L300,740 C340,820 370,900 380,980 L330,1110 L300,1240 L310,1300 M0,330 C100,250 180,200 275,175 L480,140 L615,75 M615,28 L635,350 L650,1020"/>
  <path vector-effect="non-scaling-stroke" d="M0,490 C100,470 200,430 250,420 C350,390 400,360 450,355 L635,350 M0,700 C100,660 200,600 280,575 C350,550 400,520 460,515 L635,515 M10,820 C50,790 80,770 100,770 L300,740 L620,685 L1120,670 M0,1030 L200,985 L380,985 L640,1020 C700,1030 740,1040 800,1070 L1000,1170 L1200,1210"/>
  <path vector-effect="non-scaling-stroke" d="M0,1220 L100,1205 L100,1300 M100,1205 C180,1150 250,1110 330,1105 M300,1240 L660,1250 C720,1250 760,1270 800,1300 M660,1250 L665,1300"/>
  <path vector-effect="non-scaling-stroke" d="M995,28 C1000,60 1030,80 1040,100 C1020,150 1000,160 990,155 L860,115 C830,120 810,160 800,230 C790,290 820,320 860,330 L1190,390 M1040,100 L1280,230 M1260,310 L1400,410 C1440,440 1460,500 1465,600 L1475,860 C1480,920 1520,960 1620,1000 L1640,990 M1620,1000 L1545,1090"/>
 </g>
 <g transform="translate(708,186) scale(0.14635)">
  <path vector-effect="non-scaling-stroke" d="M100,0 L160,230 L140,390 M0,330 C80,350 150,390 190,430 C250,460 300,490 370,520 L670,565 L600,880 L580,910 M310,0 L330,120 L355,295 L375,520 C350,560 330,600 335,640 L355,720 L340,820 L345,900 C320,1000 310,1040 280,1100 L140,1230 L80,1300 M330,120 L670,125 M355,295 L670,300 M665,0 L680,300 L680,560"/>
  <path vector-effect="non-scaling-stroke" d="M800,0 C820,30 870,50 930,70 C960,100 960,160 930,200 C900,240 900,280 900,300 L900,400 C890,460 870,500 865,540 L865,600 L870,900 C880,940 900,950 950,950 L1060,945 L1120,960 M905,290 C950,280 1000,300 1050,295 L1195,290 M870,600 L1180,595 M875,755 L1055,755 L1060,945 M1220,145 L1640,175 M1545,500 L1640,495 M1545,780 L1640,790 M355,675 C400,675 450,680 480,690 M0,800 C50,820 100,840 150,870 L160,1000 L0,1010 M150,990 C200,980 250,970 320,960 M0,1200 L80,1300 M600,1180 L500,1170 C450,1180 420,1200 400,1230"/>
 </g>
</g>
<!-- major white roads -->
<g fill="none" stroke="#fff" stroke-linecap="round" stroke-linejoin="round">
 <g transform="translate(-2,-4) scale(0.3004)">
  <path stroke-width="14" d="M190,15 C160,200 110,380 115,480 C120,650 160,850 185,990 L200,1270"/>
  <path stroke-width="14" d="M850,15 L865,300 C850,520 820,700 800,850 C790,950 750,1010 700,1050 C620,1110 540,1180 500,1270"/>
  <path stroke-width="14" d="M0,990 C90,978 200,980 300,1000 L640,1075 L960,1072 L1600,1235"/>
 </g>
 <g transform="translate(0,96) scale(0.13865)"><path stroke-width="28" d="M0,670 L230,640"/></g>
 <g transform="translate(708,-4) scale(0.14635)">
  <path stroke-width="26" d="M1470,20 C1400,120 1300,220 1230,320 C1180,400 1160,500 1162,600 L1180,1100 L1190,1300"/>
 </g>
 <g transform="translate(708,186) scale(0.14635)"><path stroke-width="26" d="M1190,0 L1185,600 L1200,700 L1210,950 L1040,1200 L980,1300"/></g>
</g>
<!-- yellow highways -->
<g fill="none" stroke-linecap="round" stroke-linejoin="round">
 <g transform="translate(-2,-4) scale(0.3004)">
  <path stroke="#f3c454" stroke-width="24" d="M0,62 C150,50 260,70 420,118 L1000,372 L1600,642"/>
  <path stroke="#fde396" stroke-width="18" d="M0,62 C150,50 260,70 420,118 L1000,372 L1600,642"/>
  <path stroke="#f3c454" stroke-width="14" d="M330,95 C500,72 650,42 850,12"/>
  <path stroke="#fde396" stroke-width="9" d="M330,95 C500,72 650,42 850,12"/>
  <path stroke="#f3c454" stroke-width="22" d="M760,10 C765,200 780,400 790,560 C790,750 720,900 620,1080 L455,1275"/>
  <path stroke="#fde396" stroke-width="16" d="M760,10 C765,200 780,400 790,560 C790,750 720,900 620,1080 L455,1275"/>
  <path stroke="#f3c454" stroke-width="2.5" d="M760,10 C765,200 780,400 790,560 C790,750 720,900 620,1080 L455,1275"/>
  <path stroke="#f3c454" stroke-width="10" d="M700,30 C670,50 670,90 700,105 C730,115 750,90 755,60 M790,20 C770,60 780,90 810,95 C840,95 840,50 820,20 M755,150 C710,120 670,150 680,200 C690,240 730,270 750,260 M820,60 C790,110 770,150 770,200"/>
  <path stroke="#fde396" stroke-width="5" d="M700,30 C670,50 670,90 700,105 C730,115 750,90 755,60 M790,20 C770,60 780,90 810,95 C840,95 840,50 820,20 M755,150 C710,120 670,150 680,200 C690,240 730,270 750,260 M820,60 C790,110 770,150 770,200"/>
 </g>
 <g transform="translate(468,186) scale(0.14635)">
  <path stroke="#f3c454" stroke-width="34" d="M800,340 C850,380 870,440 840,520 L740,600 C650,700 450,950 190,1300 M920,510 C850,540 780,580 740,620 M1340,600 C1200,560 1000,570 900,610 C800,660 700,760 600,880 L270,1300"/>
  <path stroke="#fde396" stroke-width="22" d="M800,340 C850,380 870,440 840,520 L740,600 C650,700 450,950 190,1300 M920,510 C850,540 780,580 740,620 M1340,600 C1200,560 1000,570 900,610 C800,660 700,760 600,880 L270,1300"/>
 </g>
 <g transform="translate(468,-4) scale(0.3004)">
  <path stroke="#f3c454" stroke-width="24" d="M-5,618 L400,790 L560,880 L800,960 L1100,1080 L1400,1190 L1610,1215"/>
  <path stroke="#fde396" stroke-width="18" d="M-5,618 L400,790 L560,880 L800,960 L1100,1080 L1400,1190 L1610,1215"/>
  <path stroke="#f3c454" stroke-width="2" d="M560,880 L800,960 L1100,1080 L1400,1190"/>
 </g>
</g>
<!-- shields -->
<g font-family="Liberation Sans" font-size="11.5" text-anchor="middle" fill="#333">
 <rect x="127" y="34" width="24" height="16" rx="8" fill="#fff" stroke="#555" stroke-width="1.2"/><text x="139" y="46">454</text>
 <rect x="282" y="101" width="24" height="17" rx="8" fill="#fff" stroke="#555" stroke-width="1.2"/><text x="294" y="113.5">454</text>
 <rect x="604" y="246" width="26" height="17" rx="8.5" fill="#fff" stroke="#555" stroke-width="1.2"/><text x="617" y="258.5">454</text>
 <rect x="244" y="24" width="21" height="14" fill="#fff" stroke="#555" stroke-width="1.2"/><text x="254.5" y="35.5">14</text>
 <rect x="217.5" y="276" width="20.5" height="14.5" fill="#fff" stroke="#555" stroke-width="1.2"/><text x="227.7" y="287.5">14</text>
</g>
<!-- labels -->
<g font-family="Liberation Sans" fill="#5f6368" stroke="#fff" stroke-width="2.5" paint-order="stroke" stroke-linejoin="round">
 <text x="14" y="24" font-size="16.5" letter-spacing="1.6">Commack</text>
 <text transform="translate(37,176) rotate(82)" font-size="12.5">Commack Rd</text>
 <text transform="translate(92,297) rotate(11)" font-size="12.5">New Hwy</text>
 <text transform="translate(869,73) rotate(83)" font-size="12.5">Old Willets Path</text>
 <text transform="translate(905,27) rotate(-62)" font-size="12.5">Old W</text>
 <text transform="translate(134,379) rotate(-57)" font-size="13.5" fill="#80521a">en Meadow State Pkwy</text>
</g>
<!-- pin -->
<path d="M472.5,186 C468,172 457,166 457,151 A15.5,15.5 0 1 1 488,151 C488,166 477,172 472.5,186 Z" fill="#ea4335" stroke="#c5221f" stroke-width=".8"/>
<circle cx="472.5" cy="151.5" r="5.2" fill="#7a1010"/>
<!-- pegman box -->
<rect x="884" y="154" width="50" height="50" rx="2" fill="#fff"/>
<circle cx="909" cy="167" r="5.5" fill="#fbbc04" stroke="#d48c00" stroke-width=".6"/>
<path d="M903,173 L915,173 C918,174 919,176 920,180 L922,188 L919,189 L917,183 L916,197 L911,197 L910,189 L908,189 L907,197 L902,197 L901,183 L899,189 L896,188 L898,180 C899,176 900,174 903,173 Z" fill="#fbbc04" stroke="#d48c00" stroke-width=".6"/>
<path d="M905,173 L909,179 L913,173 Z" fill="#e37400"/>
<!-- zoom -->
<rect x="884" y="244" width="50" height="101" rx="2" fill="#fff"/>
<path d="M897.5,268.7 H920.5 M909,257 V280.4" stroke="#666" stroke-width="5"/>
<path d="M890,294.3 H928" stroke="#e6e6e6" stroke-width="1"/>
<path d="M897.5,320 H920.5" stroke="#666" stroke-width="5"/>
<!-- google -->
<g font-family="Liberation Sans" font-size="24" font-weight="bold" stroke="#fff" stroke-opacity=".55" stroke-width="2.5" paint-order="stroke">
 <text x="8" y="365" textLength="77" lengthAdjust="spacingAndGlyphs"><tspan fill="#4285f4">G</tspan><tspan fill="#ea4335">o</tspan><tspan fill="#fbbc05">o</tspan><tspan fill="#4285f4">g</tspan><tspan fill="#34a853">l</tspan><tspan fill="#ea4335">e</tspan></text>
</g>
<rect x="752" y="358" width="194" height="17" fill="#f5f5f5" opacity=".75"/>
<text x="758.5" y="371" font-family="Liberation Sans" font-size="11.5" fill="#333" textLength="92">Map data ©2020</text>
<text x="866.8" y="371" font-family="Liberation Sans" font-size="11.5" fill="#333" textLength="72.4">Terms of Use</text>
</svg></div>

<!-- STATS -->
<div class="a card" style="left:1221px;top:804px;width:639px;height:375px"></div>
<div class="a" style="left:1347px;top:904px;width:187.5px;height:175px;background:#d0c96f;border-radius:5px"></div>
<div class="a" style="left:1547px;top:904px;width:187.5px;height:175px;background:#7eae9a;border-radius:5px"></div>
<div class="a c" style="left:1441px;top:926.3px;font-size:20px;color:#fff">Accelerometer</div>
<div class="a c" style="left:1441px;top:971px;font-size:40px;font-weight:bold;color:#fff">0</div>
<div class="a c" style="left:1441px;top:1038.7px;font-size:14.5px;color:#fff">mG</div>
<div class="a c" style="left:1641px;top:927.2px;font-size:19px;color:#fff">Speed</div>
<div class="a c" style="left:1641px;top:971px;font-size:40px;font-weight:bold;color:#fff">53</div>
<div class="a c" style="left:1641px;top:1038.3px;font-size:15px;color:#fff">mph</div>

<!-- ACTIVITY -->
<div class="a card" style="left:1874px;top:208px;width:672.5px;height:971px"></div>
<div class="a" style="left:1894px;top:232.6px;font-size:23px;font-weight:bold;color:#222">Activity</div>
<div class="a c" style="left:2210px;top:529.2px;font-size:18px;color:#222">No Activity</div>
<div class="a" style="left:1886px;top:1045px;width:648px;height:62.5px;border:1px solid #b5b5b5;border-radius:5px;background:#fff"></div>
<div class="a" style="left:1894px;top:1054.6px;font-size:20px;color:#9a9a9a">Write a comment...</div>
<svg class="a" style="left:2523px;top:1097px" width="9" height="9" viewBox="0 0 9 9"><path d="M8.5 1L1 8.5M8.5 5L5 8.5" stroke="#555" stroke-width="1"/></svg>
<div class="a" style="left:2453px;top:1114px;width:80px;height:44.5px;background:#e5e5e5;border-radius:4px"></div>
<div class="a c" style="left:2492.5px;top:1128.5px;font-size:17px;color:#a8a8a8">Send</div>

<div class="a" style="left:0;top:1297px;width:2559px;height:1px;background:#2b2b2b;z-index:9"></div><div class="a" style="left:194px;top:1297px;width:47px;height:1px;background:#6a6a6a;z-index:10"></div>
</body></html>
